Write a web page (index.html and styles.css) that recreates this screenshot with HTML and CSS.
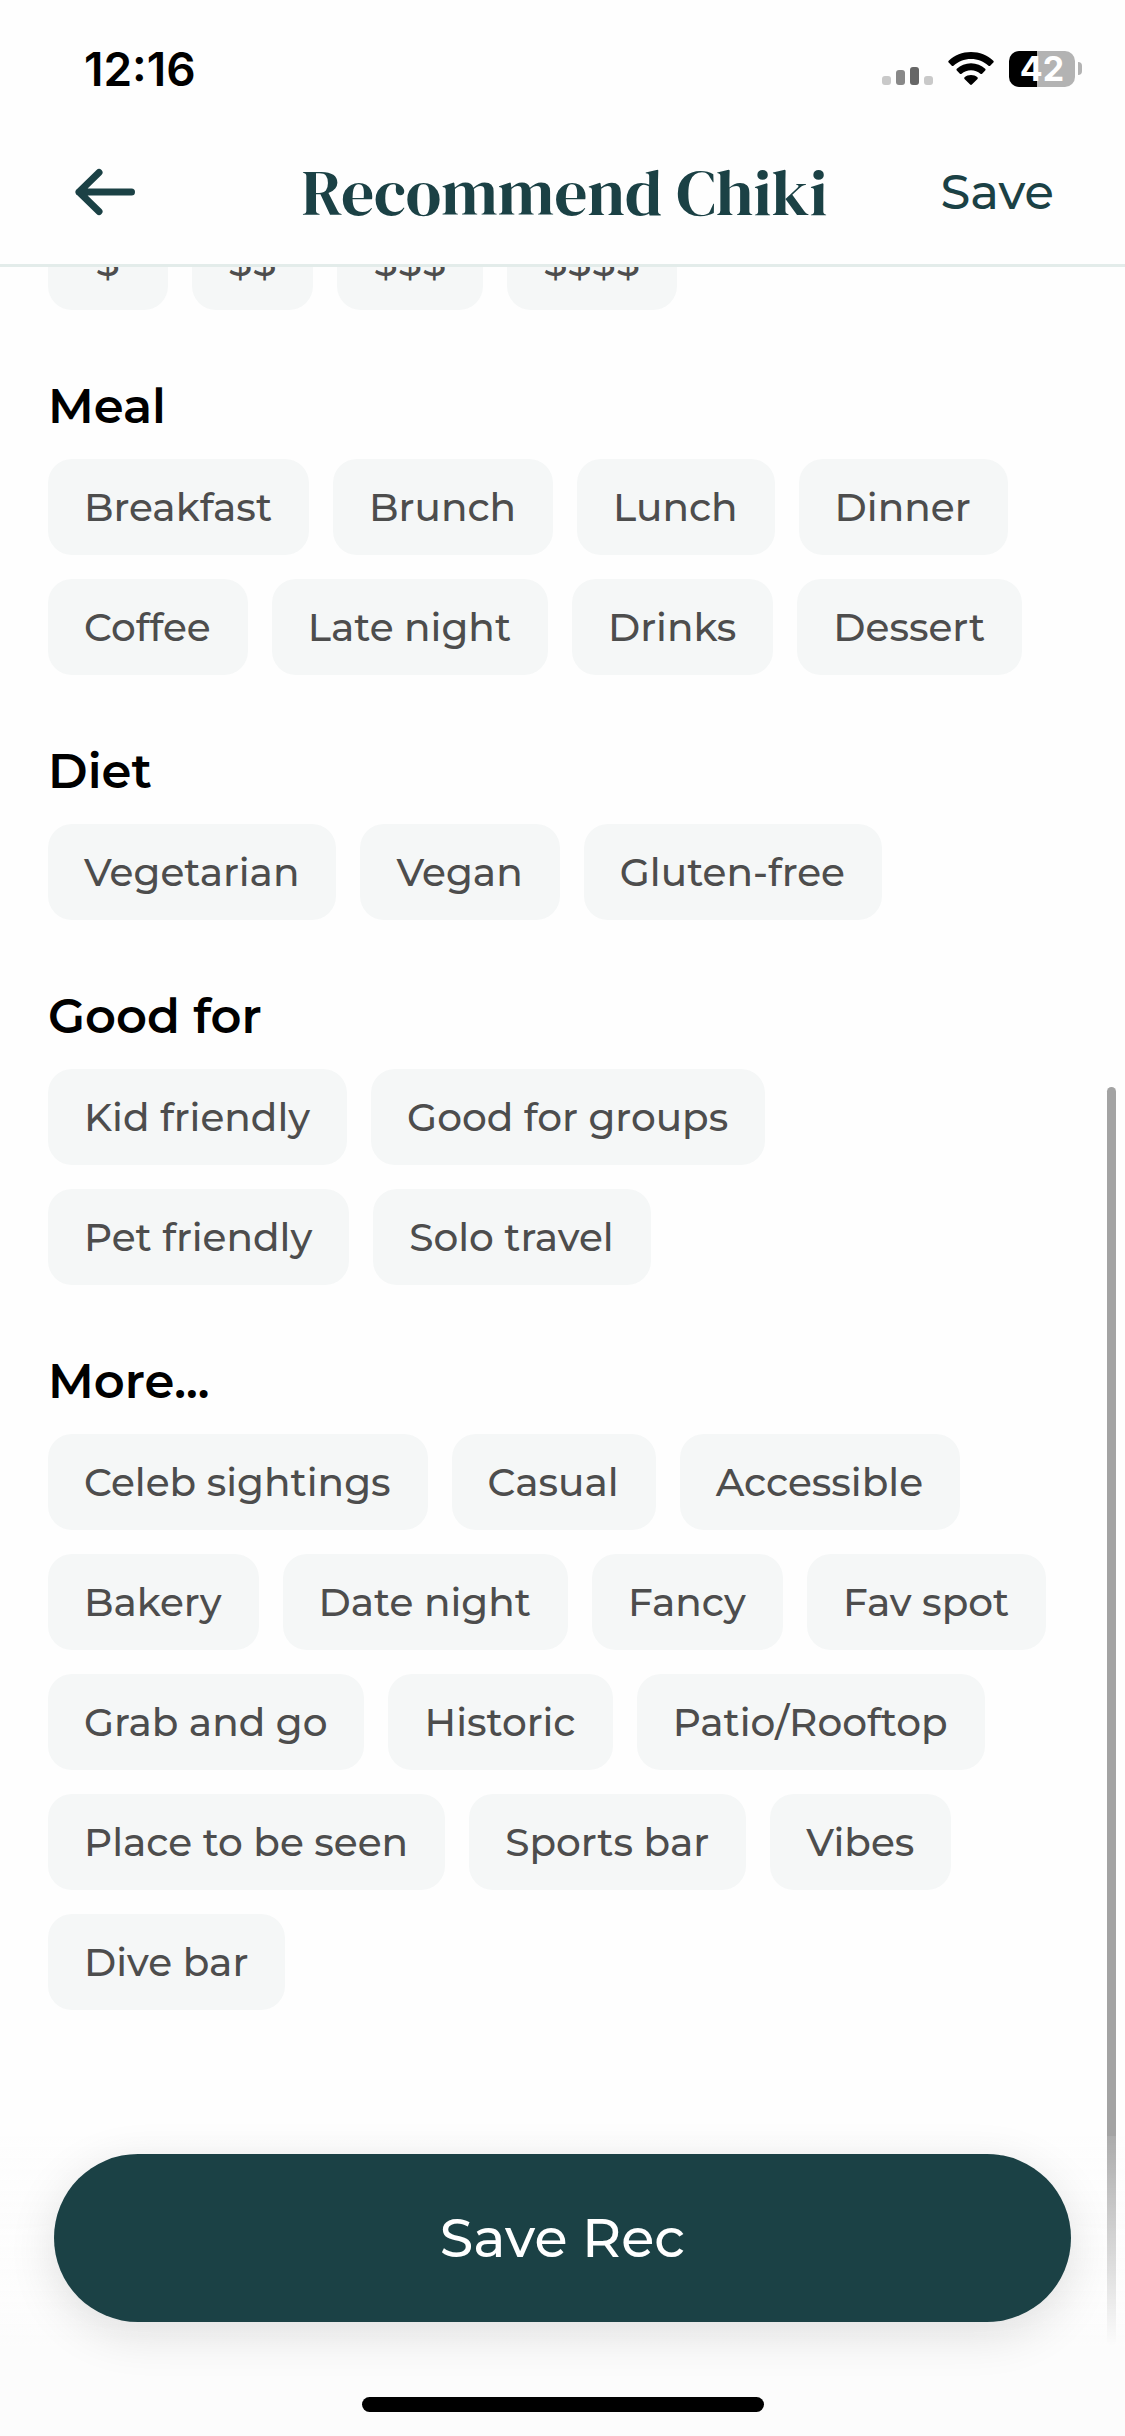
FILE: index.html
```html
<!DOCTYPE html>
<html lang="en">
<head>
  <meta charset="UTF-8">
  <meta name="viewport" content="width=device-width, initial-scale=1.0">
  <title>Recommend Chiki</title>
  <link rel="stylesheet" href="styles.css">
</head>
<body>
  <header class="header">
    <div class="status-bar">
      <span class="time">12:16</span>
      <div class="status-icons">
        <svg class="signal" width="51" height="36" viewBox="0 0 51 36" aria-hidden="true">
          <rect x="0" y="25" width="9" height="9" rx="3" fill="#c9c9c9"/>
          <rect x="14" y="19" width="9" height="15" rx="3" fill="#888"/>
          <rect x="28" y="16" width="9" height="18" rx="3" fill="#666"/>
          <rect x="42" y="25" width="9" height="9" rx="3" fill="#c9c9c9"/>
        </svg>
        <svg class="wifi" width="46" height="36" viewBox="0 0 46 36" aria-hidden="true">
          <path d="M23 1C31.600 1 39.500 4.300 45.300 9.800Q46.200 10.700 45.300 11.600L42.200 14.700Q41.400 15.500 40.500 14.700C35.900 10.500 29.800 8 23 8S10.100 10.500 5.500 14.700Q4.600 15.500 3.800 14.700L.7 11.600Q-.2 10.700 .7 9.800C6.500 4.300 14.400 1 23 1Z"/>
          <path d="M23 12.300C28.500 12.300 33.500 14.400 37.200 17.800Q38.100 18.700 37.200 19.600L34.100 22.700Q33.300 23.500 32.400 22.700C29.900 20.500 26.600 19.300 23 19.300S16.100 20.500 13.600 22.700Q12.700 23.500 11.900 22.700L8.800 19.600Q7.900 18.700 8.800 17.800C12.500 14.400 17.500 12.300 23 12.300Z"/>
          <path d="M23 24C25.500 24 27.700 24.900 29.400 26.300Q30.300 27.100 29.500 28L23.900 33.600Q23 34.500 22.100 33.600L16.500 28Q15.700 27.100 16.600 26.300C18.300 24.900 20.500 24 23 24Z"/>
        </svg>
        <div class="battery"><span class="battery-level">42</span></div>
      </div>
    </div>
    <nav class="nav">
      <button class="back" type="button" aria-label="Back">
        <svg width="60" height="48" viewBox="0 0 60 48" aria-hidden="true">
          <path d="M24 4.500L4 24L24 43.500M4 24H56.500"/>
        </svg>
      </button>
      <h1 class="title">Recommend Chiki</h1>
      <button class="save" type="button">Save</button>
    </nav>
  </header>

  <main class="content">
    <div class="scroller">
      <div class="chips">
        <button class="chip" type="button">$</button>
        <button class="chip" type="button">$$</button>
        <button class="chip" type="button">$$$</button>
        <button class="chip" type="button">$$$$</button>
      </div>

      <h2 class="heading">Meal</h2>
      <div class="chips">
        <button class="chip" type="button">Breakfast</button>
        <button class="chip" type="button">Brunch</button>
        <button class="chip" type="button">Lunch</button>
        <button class="chip" type="button">Dinner</button>
        <button class="chip" type="button">Coffee</button>
        <button class="chip" type="button">Late night</button>
        <button class="chip" type="button">Drinks</button>
        <button class="chip" type="button">Dessert</button>
      </div>

      <h2 class="heading">Diet</h2>
      <div class="chips">
        <button class="chip" type="button">Vegetarian</button>
        <button class="chip" type="button">Vegan</button>
        <button class="chip" type="button">Gluten-free</button>
      </div>

      <h2 class="heading">Good for</h2>
      <div class="chips">
        <button class="chip" type="button">Kid friendly</button>
        <button class="chip" type="button">Good for groups</button>
        <button class="chip" type="button">Pet friendly</button>
        <button class="chip" type="button">Solo travel</button>
      </div>

      <h2 class="heading">More...</h2>
      <div class="chips">
        <button class="chip" type="button">Celeb sightings</button>
        <button class="chip" type="button">Casual</button>
        <button class="chip" type="button">Accessible</button>
        <button class="chip" type="button">Bakery</button>
        <button class="chip" type="button">Date night</button>
        <button class="chip" type="button">Fancy</button>
        <button class="chip" type="button">Fav spot</button>
        <button class="chip" type="button">Grab and go</button>
        <button class="chip" type="button">Historic</button>
        <button class="chip" type="button">Patio/Rooftop</button>
        <button class="chip" type="button">Place to be seen</button>
        <button class="chip" type="button">Sports bar</button>
        <button class="chip" type="button">Vibes</button>
        <button class="chip" type="button">Dive bar</button>
      </div>
    </div>
    <div class="scroll-thumb"></div>
  </main>

  <footer class="footer">
    <button class="save-rec" type="button">Save Rec</button>
    <div class="home-indicator"></div>
  </footer>
</body>
</html>
```
FILE: styles.css
```css
* {
  box-sizing: border-box;
}
body {
  margin: 0;
  min-height: 100vh;
  display: flex;
  flex-direction: column;
  background: #fefefe;
  color: #000;
  font-family: Montserrat, Inter, sans-serif;
}
button {
  margin: 0;
  padding: 0;
  border: none;
  background: none;
  font-family: inherit;
  cursor: pointer;
}

/* status bar + nav */
.header {
  border-bottom: 3px solid #e3ecea;
}
.status-bar {
  display: flex;
  justify-content: space-between;
  align-items: center;
  height: 120px;
  padding: 18px 43px 0 84px;
}
.time {
  font-family: Inter, sans-serif;
  font-size: 46px;
  font-weight: 600;
}
.status-icons {
  display: flex;
  align-items: center;
  gap: 15px;
}
.status-icons svg {
  display: block;
}
.battery {
  position: relative;
  width: 66px;
  height: 36px;
  margin-right: 7px;
  border-radius: 10px;
  background: linear-gradient(to right, #000 42%, #b3b3b3 42%);
}
.battery::after {
  content: "";
  position: absolute;
  top: 11px;
  right: -7px;
  width: 4px;
  height: 13px;
  border-radius: 0 4px 4px 0;
  background: #b3b3b3;
}
.battery-level {
  display: block;
  color: #fff;
  font-family: Inter, sans-serif;
  font-size: 34px;
  font-weight: 700;
  line-height: 36px;
  text-align: center;
}
.nav {
  display: grid;
  grid-template-columns: 1fr auto 1fr;
  align-items: center;
  height: 144px;
  padding: 0 71px 0 75px;
}
.back {
  justify-self: start;
}
.back svg {
  display: block;
  fill: none;
  stroke: #1b4145;
  stroke-width: 7;
  stroke-linecap: round;
  stroke-linejoin: round;
}
.title {
  margin: 0;
  color: #1b4145;
  font-family: "DM Serif Display", "Liberation Serif", serif;
  font-size: 65px;
  font-weight: 400;
}
.save {
  justify-self: end;
  color: #1b4145;
  font-size: 48px;
  font-weight: 500;
}

/* tags */
.content {
  position: relative;
  flex: 1;
  overflow: hidden;
}
.scroller {
  margin-top: -53px;
  padding: 0 48px 420px;
}
.heading {
  margin: 66px 0 23px;
  font-size: 48px;
  font-weight: 600;
  line-height: 60px;
}
.chips {
  display: flex;
  flex-wrap: wrap;
  gap: 24px;
}
.chip {
  min-width: 120px;
  height: 96px;
  padding: 0 37px 0 36px;
  border-radius: 24px;
  background: #f5f7f7;
  color: #4d4d4d;
  font-size: 39px;
  font-weight: 500;
}
.scroll-thumb {
  position: absolute;
  top: 820px;
  right: 9px;
  bottom: 90px;
  width: 9px;
  border-radius: 5px;
  background: #a3a3a3;
}

/* bottom bar */
.footer {
  position: fixed;
  left: 0;
  right: 0;
  bottom: 0;
  display: flex;
  flex-direction: column;
  align-items: center;
  gap: 75px;
  padding: 18px 54px 24px;
  background: linear-gradient(to bottom, rgba(252, 252, 252, 0.1), #fcfcfc 70%);
}
.save-rec {
  width: 100%;
  height: 168px;
  border-radius: 84px;
  background: #1b4145;
  box-shadow: 0 12px 48px rgba(0, 0, 0, 0.12);
  color: #fff;
  font-size: 54px;
  font-weight: 500;
}
.home-indicator {
  width: 402px;
  height: 15px;
  border-radius: 8px;
  background: #000;
}
```
